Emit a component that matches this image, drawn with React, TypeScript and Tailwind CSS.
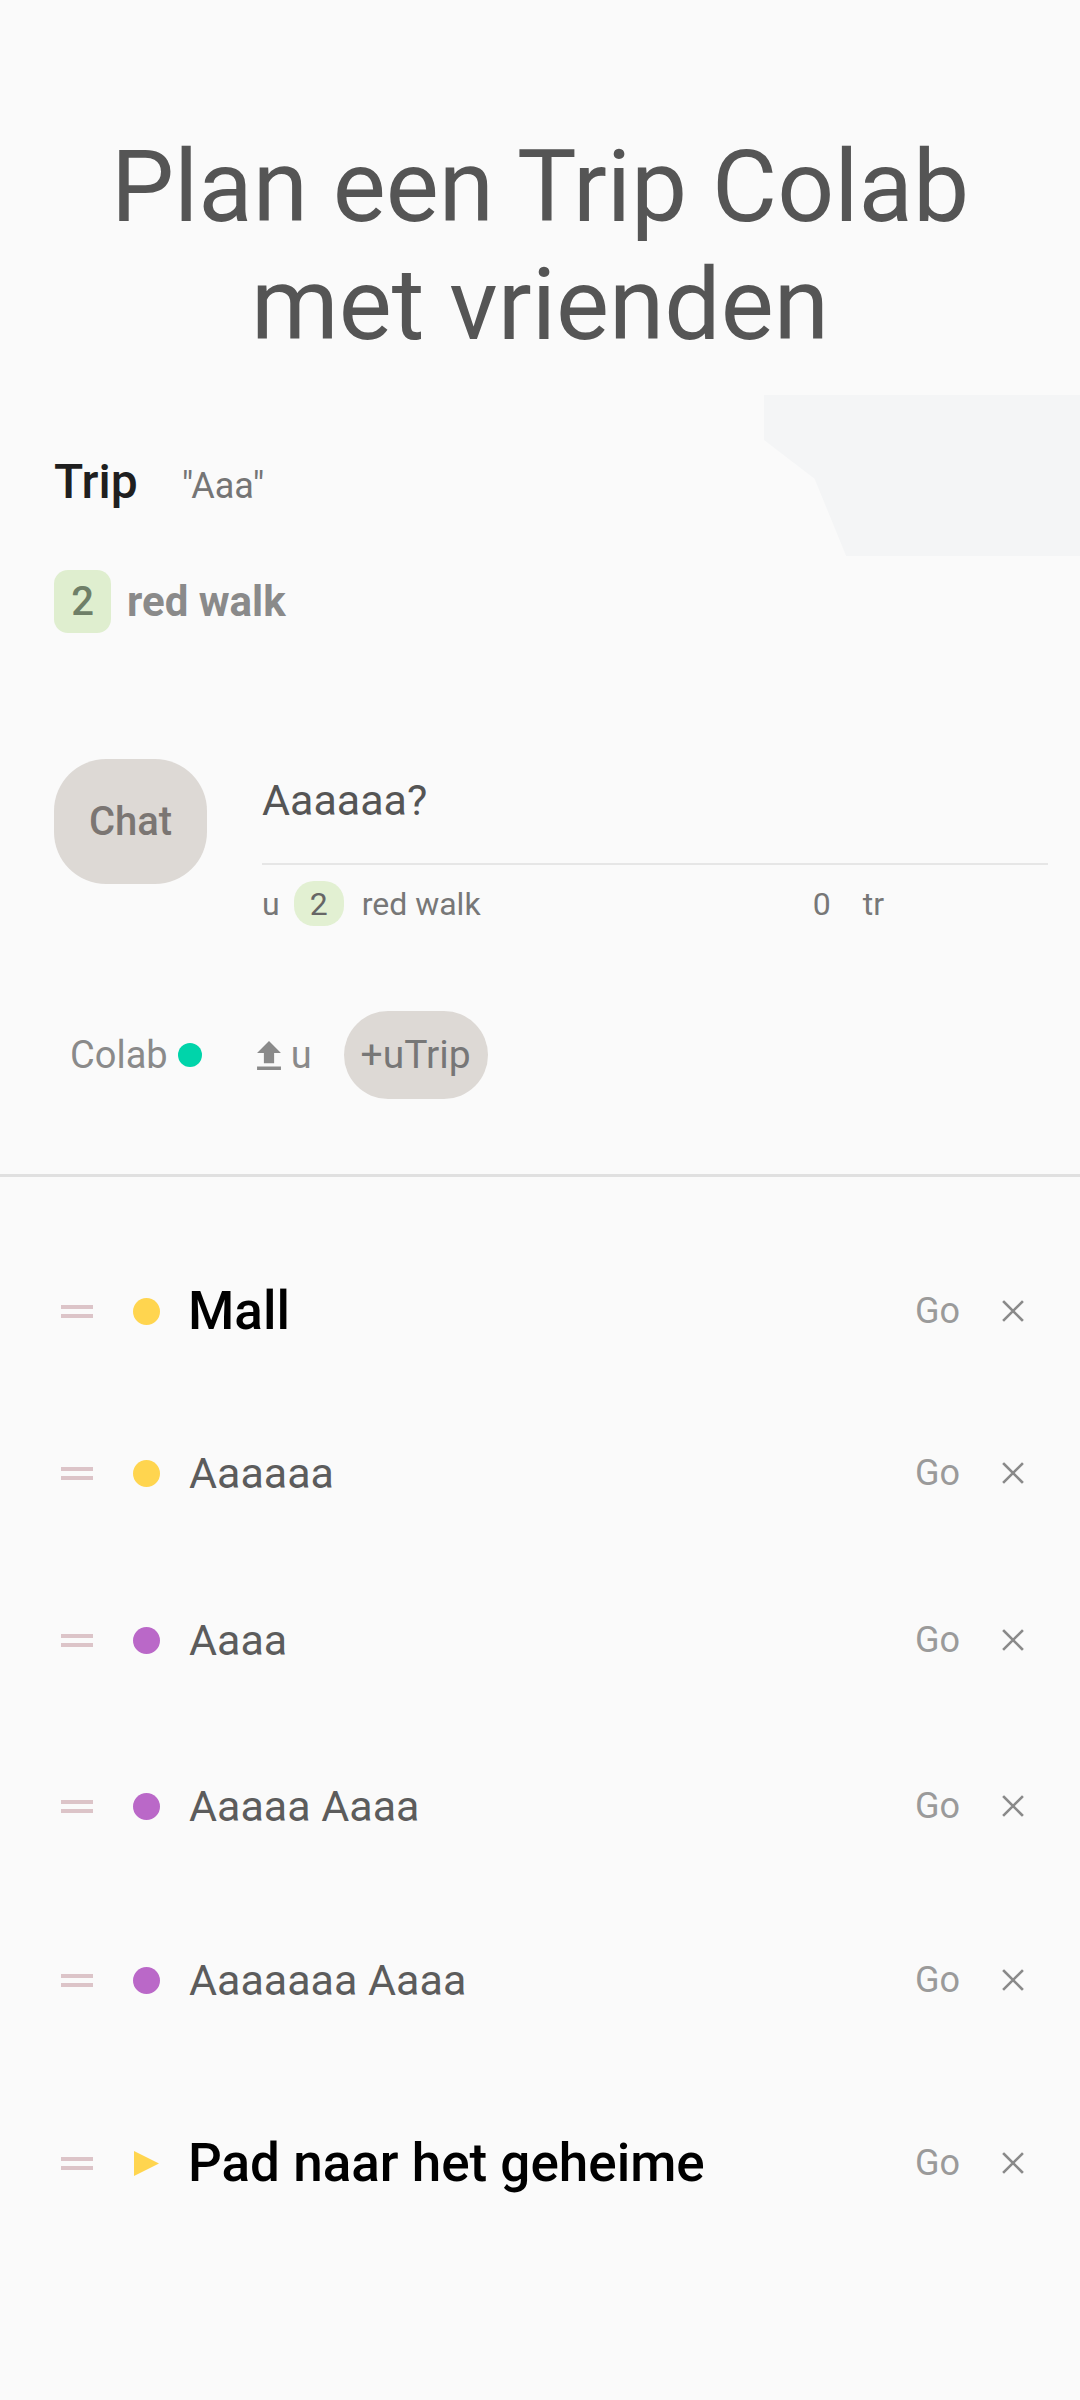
import React from "react";

interface Stop {
  label: string;
  marker: "yellow" | "purple" | "triangle";
  strong?: boolean;
  gap: string;
}

const stops: Stop[] = [
  { label: "Mall", marker: "yellow", strong: true, gap: "mt-[74px]" },
  { label: "Aaaaaa", marker: "yellow", gap: "mt-[42px]" },
  { label: "Aaaa", marker: "purple", gap: "mt-[47px]" },
  { label: "Aaaaa Aaaa", marker: "purple", gap: "mt-[46px]" },
  { label: "Aaaaaaa Aaaa", marker: "purple", gap: "mt-[54px]" },
  { label: "Pad naar het geheime", marker: "triangle", strong: true, gap: "mt-[63px]" },
];

function Handle() {
  return (
    <div className="flex w-[32px] flex-col gap-[5px]">
      <div className="h-[4px] bg-[#dcc4c8]" />
      <div className="h-[4px] bg-[#dcc4c8]" />
    </div>
  );
}

function Marker({ kind }: { kind: Stop["marker"] }) {
  if (kind === "triangle") {
    return (
      <svg width="27" height="27" viewBox="0 0 27 27" className="shrink-0">
        <polygon points="1,1 26,13.5 1,26" fill="#ffd54f" />
      </svg>
    );
  }
  return (
    <div
      className={
        kind === "yellow"
          ? "h-[27px] w-[27px] shrink-0 rounded-full bg-[#ffd54f]"
          : "h-[27px] w-[27px] shrink-0 rounded-full bg-[#ba68c8]"
      }
    />
  );
}

function CloseIcon() {
  return (
    <svg width="22" height="22" viewBox="0 0 22 22" className="shrink-0">
      <path d="M2 2 L20 20 M20 2 L2 20" stroke="#8a8a8a" strokeWidth="2.6" strokeLinecap="square" />
    </svg>
  );
}

function UploadIcon() {
  return (
    <svg width="24" height="29" viewBox="5 3 14 17" className="shrink-0">
      <path d="M5 20h14v-2H5v2zm0-10h4v6h6v-6h4l-7-7-7 7z" fill="#8a8a8a" />
    </svg>
  );
}

function StopRow({ stop }: { stop: Stop }) {
  return (
    <div className={`${stop.gap} flex h-[120px] items-center pl-[61px] pr-[56px]`}>
      <Handle />
      <div className="ml-[40px]">
        <Marker kind={stop.marker} />
      </div>
      <div
        className={
          stop.strong
            ? "ml-[28px] flex-1 overflow-hidden whitespace-nowrap text-[53px] font-medium leading-[66px] text-black"
            : "ml-[29px] flex-1 overflow-hidden whitespace-nowrap text-[43px] leading-[56px] text-[#5c5c5c]"
        }
      >
        {stop.label}
      </div>
      <span className="text-[36px] leading-[44px] text-[#9a9a9a]">Go</span>
      <div className="ml-[42px]">
        <CloseIcon />
      </div>
    </div>
  );
}

function App() {
  return (
    <div className="relative min-h-[2400px] w-full overflow-hidden bg-[#fafafa] font-['Roboto',sans-serif]">
      {/* faint shape behind the trip header */}
      <div className="absolute left-[764px] top-[395px] h-[161px] w-[316px] bg-[#f4f5f6] [clip-path:polygon(0_0,100%_0,100%_100%,26%_100%,16%_52%,0_28%)]" />

      <div className="relative">
        <h1 className="pt-[128px] text-center text-[100px] font-normal leading-[118px] text-[#555555]">
          Plan een Trip Colab
          <br />
          met vrienden
        </h1>

        <div className="mt-[90px] flex items-baseline pl-[54px]">
          <span className="text-[48px] font-medium leading-[56px] text-[#1f1f1f]">Trip</span>
          <span className="ml-[44px] text-[36px] leading-[44px] text-[#757575]">"Aaa"</span>
        </div>

        <div className="mt-[60px] flex items-center pl-[54px]">
          <div className="flex h-[63px] w-[57px] items-center justify-center rounded-[14px] bg-[#dfeecf] text-[40px] font-medium text-[#6f7f68]">
            2
          </div>
          <span className="ml-[16px] text-[42px] font-bold text-[#8a8a8a]">red walk</span>
        </div>

        <div className="mt-[126px] flex items-start pl-[54px] pr-[32px]">
          <div className="flex h-[125px] w-[153px] shrink-0 items-center justify-center rounded-[52px] bg-[#ddd9d5] text-[40px] font-medium text-[#7b7673]">
            Chat
          </div>
          <div className="ml-[55px] flex-1 pt-[11px]">
            <div className="text-[43px] leading-[60px] text-[#555555]">Aaaaaa?</div>
            <div className="mt-[33px] h-[2px] bg-[#e6e6e6]" />
            <div className="mt-[16px] flex h-[45px] items-center pr-[164px] text-[32px] text-[#777777]">
              <span>u</span>
              <span className="ml-[14px] flex h-[45px] w-[50px] items-center justify-center rounded-[20px] bg-[#e2f0d2] text-[#666666]">
                2
              </span>
              <span className="ml-[18px]">red walk</span>
              <span className="ml-auto">0</span>
              <span className="ml-[32px]">tr</span>
            </div>
          </div>
        </div>

        <div className="mt-[85px] flex h-[88px] items-center pl-[70px]">
          <span className="text-[38px] text-[#8a8a8a]">Colab</span>
          <div className="ml-[10px] h-[24px] w-[24px] rounded-full bg-[#00d4aa]" />
          <div className="ml-[55px] flex items-center">
            <UploadIcon />
            <span className="ml-[10px] text-[38px] text-[#8a8a8a]">u</span>
          </div>
          <div className="ml-[32px] flex h-[88px] items-center rounded-full bg-[#ddd9d5] px-[17px] text-[39px] text-[#777777]">
            +uTrip
          </div>
        </div>

        <div className="mt-[75px] h-[3px] bg-[#e0e0e0]" />

        <div className="pb-[120px]">
          {stops.map((stop) => (
            <StopRow key={stop.label} stop={stop} />
          ))}
        </div>
      </div>
    </div>
  );
}

export default App;
